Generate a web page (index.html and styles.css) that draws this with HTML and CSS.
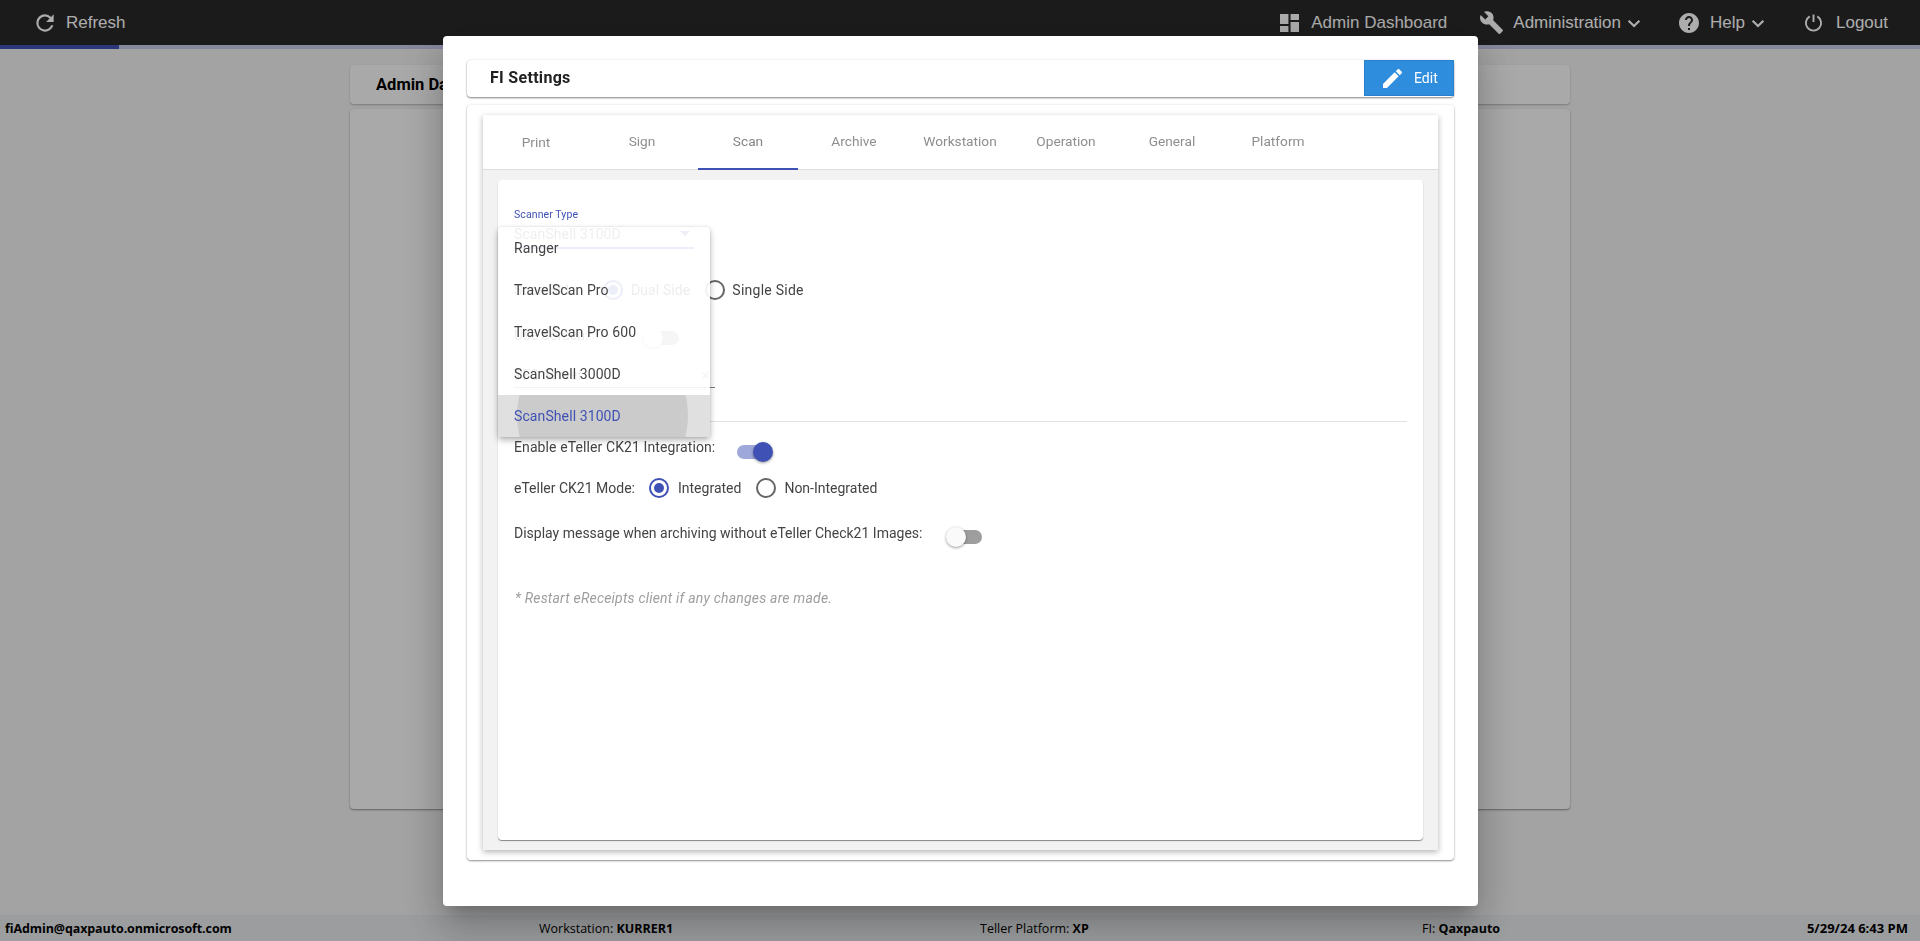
FILE: index.html
```html
<!DOCTYPE html>
<html lang="en">
<head>
<meta charset="utf-8">
<title>FI Settings</title>
<link rel="stylesheet" href="styles.css">
</head>
<body>
<div class="app">
  <header class="topbar">
    <a class="nav-item refresh">
      <svg class="icon" viewBox="0 0 24 24"><path d="M17.65 6.35A7.96 7.96 0 0 0 12 4a8 8 0 1 0 7.73 10h-2.08A6 6 0 1 1 12 6c1.66 0 3.14.69 4.22 1.78L13 11h7V4l-2.35 2.35z"/></svg>
      <span>Refresh</span>
    </a>
    <nav class="nav-right">
      <a class="nav-item dash">
        <svg class="icon" viewBox="3 3 18 18" preserveAspectRatio="none"><path d="M3 13h8V3H3v10zm0 8h8v-6H3v6zm10 0h8V11h-8v10zm0-18v6h8V3h-8z"/></svg>
        <span>Admin Dashboard</span>
      </a>
      <a class="nav-item admin">
        <svg class="icon wrench" viewBox="0 0 24 24"><path d="M22.7 19l-9.1-9.1c.9-2.3.4-5-1.5-6.9-2-2-5-2.4-7.4-1.3L9 6 6 9 1.6 4.7C.4 7.1.9 10.1 2.9 12.1c1.9 1.9 4.6 2.4 6.9 1.5l9.1 9.1c.4.4 1 .4 1.4 0l2.3-2.3c.5-.4.5-1.1.1-1.4z"/></svg>
        <span>Administration</span>
        <svg class="chevron" viewBox="0 0 12 8"><path d="M1.2 1.5 6 6.2l4.8-4.7" /></svg>
      </a>
      <a class="nav-item help">
        <svg class="icon" viewBox="2 2 20 20"><path d="M12 2C6.48 2 2 6.48 2 12s4.48 10 10 10 10-4.48 10-10S17.52 2 12 2zm1 17h-2v-2h2v2zm2.07-7.75l-.9.92C13.45 12.9 13 13.5 13 15h-2v-.5c0-1.1.45-2.1 1.17-2.83l1.24-1.26c.37-.36.59-.86.59-1.41 0-1.1-.9-2-2-2s-2 .9-2 2H8c0-2.21 1.79-4 4-4s4 1.79 4 4c0 .88-.36 1.68-.93 2.25z"/></svg>
        <span>Help</span>
        <svg class="chevron" viewBox="0 0 12 8"><path d="M1.2 1.5 6 6.2l4.8-4.7" /></svg>
      </a>
      <a class="nav-item logout">
        <svg class="icon power" viewBox="0 0 20 20"><path d="M10 1.5v8M6 3.6a8 8 0 1 0 8 0" /></svg>
        <span>Logout</span>
      </a>
    </nav>
  </header>
  <div class="progress"><div class="progress-fill"></div></div>

  <main class="page">
    <div class="page-title">Admin Dashboard</div>
    <div class="page-card"></div>
  </main>

  <footer class="statusbar">
    <div class="strong user">fiAdmin@qaxpauto.onmicrosoft.com</div>
    <div>Workstation: <b>KURRER1</b></div>
    <div>Teller Platform: <b>XP</b></div>
    <div>FI: <b>Qaxpauto</b></div>
    <div class="strong date">5/29/24 6:43 PM</div>
  </footer>
</div>

<div class="backdrop">
  <section class="modal">
    <div class="modal-head">
      <h2>FI Settings</h2>
      <button class="edit-btn">
        <svg viewBox="3 3 18 18"><path d="M3 17.25V21h3.75L17.81 9.94l-3.75-3.75L3 17.25zM20.71 7.04c.39-.39.39-1.02 0-1.41l-2.34-2.34c-.39-.39-1.02-.39-1.41 0l-1.83 1.83 3.75 3.75 1.83-1.83z"/></svg>
        <span>Edit</span>
      </button>
    </div>
    <div class="modal-body">
      <div class="tabs-card">
        <div class="tabs">
          <div class="tab print">Print</div>
          <div class="tab">Sign</div>
          <div class="tab active">Scan</div>
          <div class="tab">Archive</div>
          <div class="tab">Workstation</div>
          <div class="tab">Operation</div>
          <div class="tab">General</div>
          <div class="tab">Platform</div>
        </div>
        <div class="tab-content">
          <div class="panel">
            <label class="field-label">Scanner Type</label>
            <div class="select">
              <span>ScanShell 3100D</span>
              <i class="caret"></i>
            </div>
            <div class="row side-row">
              <span class="row-label">Scan Side:</span>
              <span class="radio on"></span><span class="radio-text">Dual Side</span>
              <span class="radio second"></span><span class="radio-text wide">Single Side</span>
            </div>
            <div class="row use-row">
              <span class="row-label">Use Screen:</span>
              <span class="toggle off"><i></i></span>
            </div>
            <div class="text-field">
              <span>TFS Server</span>
              <i class="clear">×</i>
            </div>
            <hr class="divider">
            <div class="row enable-row">
              <span class="row-label">Enable eTeller CK21 Integration:</span>
              <span class="toggle on"><i></i></span>
            </div>
            <div class="row mode-row">
              <span class="row-label">eTeller CK21 Mode:</span>
              <span class="radio on"></span><span class="radio-text">Integrated</span>
              <span class="radio second"></span><span class="radio-text">Non-Integrated</span>
            </div>
            <div class="row display-row">
              <span class="row-label">Display message when archiving without eTeller Check21 Images:</span>
              <span class="toggle off"><i></i></span>
            </div>
            <p class="note">* Restart eReceipts client if any changes are made.</p>

            <ul class="menu">
              <li>Ranger</li>
              <li>TravelScan Pro</li>
              <li>TravelScan Pro 600</li>
              <li>ScanShell 3000D</li>
              <li class="selected"><span class="ripple"></span><span class="item-text">ScanShell 3100D</span></li>
            </ul>
          </div>
        </div>
      </div>
    </div>
  </section>
</div>
</body>
</html>
```
FILE: styles.css
```css
* { box-sizing: border-box; }
html, body { margin: 0; height: 100%; overflow: hidden; }
body { font-family: Roboto, "Liberation Sans", Arial, sans-serif; background: #f0f0f0; color: #212121; }

.app { height: 941px; display: flex; flex-direction: column; }

/* top bar */
.topbar { height: 45px; flex: none; background: #292929; color: #fff; display: flex; align-items: center; padding: 0 32px 0 32px; font: 17px "Liberation Sans", Arial, sans-serif; }
.nav-item { display: flex; align-items: center; }
.icon { width: 18px; height: 18px; fill: #fff; flex: none; }
.refresh .icon { margin-right: 8px; width: 26px; height: 26px; }
.nav-right { margin-left: auto; display: flex; align-items: center; }
.dash .icon { width: 19px; margin-right: 12px; }
.admin { margin-left: 32px; }
.admin .wrench { width: 25px; height: 25px; margin-right: 9px; }
.help { margin-left: 38px; }
.help .icon { width: 20px; height: 20px; margin-right: 11px; }
.logout { margin-left: 39px; }
.logout .power { width: 19px; height: 19px; margin-right: 13px; fill: none; stroke: #fff; stroke-width: 2; }
.chevron { width: 14px; height: 9px; margin-left: 6px; margin-top: 2px; fill: none; stroke: #fff; stroke-width: 2; }

.progress { height: 4px; flex: none; background: #c5cae9; }
.progress-fill { width: 119px; height: 100%; background: #3f51b5; }

/* page behind the dialog */
.page { flex: 1; min-height: 0; padding: 16px 350px 0; display: flex; flex-direction: column; gap: 5px; }
.page-title { height: 39px; background: #fafafa; border-radius: 4px; box-shadow: 0 1px 2px rgba(0,0,0,.25); padding: 0 26px; line-height: 39px; font-size: 16.5px; font-weight: 700; color: #000; }
.page-card { height: 700px; background: #fafafa; border-radius: 4px; box-shadow: 0 1px 2px rgba(0,0,0,.4); }

/* status bar */
.statusbar { height: 26px; flex: none; background: #e6e8ea; display: grid; grid-template-columns: 534px 441px 442px 1fr auto; align-items: center; padding: 0 12px 0 5px; font: 12.5px "Open Sans", "Liberation Sans", sans-serif; color: #000; }
.statusbar b, .strong { font-weight: 700; }
.user { letter-spacing: -.1px; }
.date { justify-self: end; font-size: 13px; }

/* dialog */
.backdrop { position: fixed; inset: 0; background: rgba(0,0,0,.32); display: flex; justify-content: center; padding-top: 36px; padding-left: 1px; }
.modal { width: 1035px; height: 870px; background: #fff; border-radius: 4px; padding: 24px; box-shadow: 0 11px 15px -7px rgba(0,0,0,.2), 0 24px 38px 3px rgba(0,0,0,.14), 0 9px 46px 8px rgba(0,0,0,.12); display: flex; flex-direction: column; }
.modal-head { height: 37px; flex: none; display: flex; align-items: flex-start; justify-content: space-between; border-radius: 4px; box-shadow: 0 1px 2px rgba(0,0,0,.5), 0 -1px 2px rgba(0,0,0,.03); padding-left: 23px; }
.modal-head h2 { margin: 0; font-size: 16px; font-weight: 700; line-height: 35px; letter-spacing: .3px; color: #212121; }
.edit-btn { width: 90px; height: 36px; background: #2f8ddd; border: 1px solid #2a80ca; color: #fff; padding: 0 0 0 18px; display: flex; align-items: center; gap: 12px; font: 14px Roboto, sans-serif; }
.edit-btn svg { width: 19px; height: 19px; fill: #fff; }

.modal-body { margin-top: 8px; height: 755px; flex: none; border-radius: 4px; box-shadow: 0 1px 2px rgba(0,0,0,.45), 0 -1px 3px rgba(0,0,0,.04); padding: 10px 16px; }
.tabs-card { height: 735px; display: flex; flex-direction: column; box-shadow: 0 2px 6px rgba(0,0,0,.3); }
.tabs { height: 55px; flex: none; display: flex; border-bottom: 1px solid #dcdcdc; background: #fff; }
.tab { width: 106px; display: flex; align-items: center; justify-content: center; color: #8e8e8e; font-size: 13.7px; position: relative; padding-bottom: 3px; }
.tab.print { padding-bottom: 1px; }
.tab.active { color: #858585; }
.tab.active::after { content: ""; position: absolute; left: 3px; width: 100px; bottom: -1px; height: 2px; background: #3f51b5; }
.tab-content { flex: 1; min-height: 0; background: #f2f2f2; padding: 10px 15px; }
.panel { height: 660px; background: #fff; border-radius: 4px; box-shadow: 0 1px 1px rgba(0,0,0,.45); padding: 29px 16px 0; position: relative; font-size: 14px; letter-spacing: .1px; color: #444; }

.field-label { display: block; height: 12px; font-size: 10.5px; line-height: 12px; color: #3f51b5; }
.select { width: 180px; height: 25px; margin-top: 3px; padding-bottom: 4px; border-bottom: 2px solid #3f51b5; display: flex; justify-content: space-between; align-items: center; color: #555; }
.caret { width: 0; height: 0; border: 5px solid transparent; border-top-color: #3f51b5; border-bottom-width: 0; margin-right: 4px; }

.row { display: flex; align-items: center; }
.side-row { height: 32px; margin-top: 25px; }
.use-row { height: 30px; margin-top: 14px; }
.row-label { display: block; }
.side-row .row-label { width: 89px; }
.use-row .row-label { width: 131px; }
.use-row .toggle { top: 3px; }

.radio { width: 20px; height: 20px; flex: none; border: 2px solid #666; border-radius: 50%; background: #fff; position: relative; }
.radio.on { border-color: #3f51b5; }
.radio.on::after { content: ""; position: absolute; inset: 3px; border-radius: 50%; background: #3f51b5; }
.radio.second { margin-left: 15px; }
.radio-text { margin-left: 8px; }
.radio-text.wide { margin-left: 7px; letter-spacing: .25px; }

.toggle { width: 34px; height: 14px; border-radius: 7px; position: relative; display: block; flex: none; }
.toggle i { position: absolute; top: -3px; width: 20px; height: 20px; border-radius: 50%; box-shadow: 0 1px 3px rgba(0,0,0,.4); }
.toggle.on { background: #9fa8da; }
.toggle.on i { right: -2px; background: #3f51b5; }
.toggle.off { background: #9e9e9e; }
.toggle.off i { left: -2px; background: #fafafa; }

.text-field { width: 201px; height: 25px; margin-top: 13px; border-bottom: 1px solid #777; display: flex; justify-content: space-between; align-items: center; color: #555; }
.clear { font-style: normal; font-size: 16px; color: #999; margin-right: 5px; }

.divider { border: 0; height: 1px; background: #e0e0e0; margin: 33px 0 0; }

.enable-row { height: 22px; margin-top: 15px; }
.enable-row .row-label { margin-top: -2px; }
.enable-row .toggle { margin-left: 22px; top: 4px; }
.mode-row { height: 30px; margin-top: 14px; letter-spacing: 0; }
.mode-row .row-label { margin-right: 14px; }
.mode-row .radio-text { margin-left: 9px; }
.mode-row .radio.second { margin-left: 15px; }
.mode-row .radio.second + .radio-text { margin-left: 8px; }
.display-row { height: 30px; margin-top: 13px; letter-spacing: 0; }
.display-row .row-label { margin-top: 4px; }
.display-row .toggle { margin-left: 26px; top: 6px; }
.note { margin: 42px 0 0 1px; font-style: italic; letter-spacing: .2px; color: #9e9e9e; line-height: 20px; }

/* open dropdown */
.menu { list-style: none; margin: 0; padding: 0; position: absolute; left: 0; top: 47px; width: 212px; height: 210px; background: rgba(255,255,255,.9); border-radius: 4px; overflow: hidden; box-shadow: 0 3px 6px rgba(0,0,0,.3), 0 0 2px rgba(0,0,0,.12); color: #444; }
.menu li { height: 42px; padding: 0 16px; display: flex; align-items: center; position: relative; overflow: hidden; }
.menu .selected { background: #e0e0e0; color: #3f51b5; }
.ripple { position: absolute; left: 19px; top: -65px; width: 171px; height: 171px; border-radius: 50%; background: #cbcbcb; }
.item-text { position: relative; }
```
